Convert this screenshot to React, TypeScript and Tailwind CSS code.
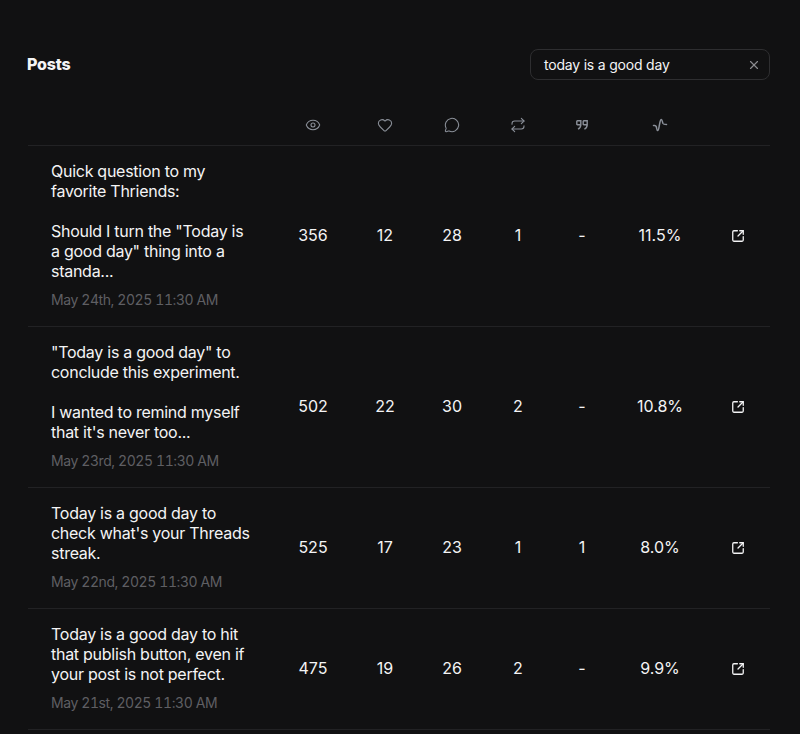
import { Eye, Heart, MessageCircle, Repeat, X, SquareArrowOutUpRight } from "lucide-react";

interface Post {
  lines: string[];
  date: string;
  views: string;
  likes: string;
  replies: string;
  reposts: string;
  quotes: string;
  rate: string;
}

const posts: Post[] = [
  {
    lines: ["Quick question to my", "favorite Thriends:", "", 'Should I turn the "Today is', 'a good day" thing into a', "standa..."],
    date: "May 24th, 2025 11:30 AM",
    views: "356",
    likes: "12",
    replies: "28",
    reposts: "1",
    quotes: "-",
    rate: "11.5%",
  },
  {
    lines: ['"Today is a good day" to', "conclude this experiment.", "", "I wanted to remind myself", "that it's never too..."],
    date: "May 23rd, 2025 11:30 AM",
    views: "502",
    likes: "22",
    replies: "30",
    reposts: "2",
    quotes: "-",
    rate: "10.8%",
  },
  {
    lines: ["Today is a good day to", "check what's your Threads", "streak."],
    date: "May 22nd, 2025 11:30 AM",
    views: "525",
    likes: "17",
    replies: "23",
    reposts: "1",
    quotes: "1",
    rate: "8.0%",
  },
  {
    lines: ["Today is a good day to hit", "that publish button, even if", "your post is not perfect."],
    date: "May 21st, 2025 11:30 AM",
    views: "475",
    likes: "19",
    replies: "26",
    reposts: "2",
    quotes: "-",
    rate: "9.9%",
  },
];

const cols = "grid grid-cols-[249px_72px_72px_62px_70px_58px_98px_61px] items-center";
const num = "mb-[2px] text-center";

function QuoteIcon() {
  return (
    <svg width="14" height="14" viewBox="0 0 14 14" fill="none" stroke="currentColor" strokeWidth="1.4">
      <path d="M5.800 2.800H2.400a.6.6 0 0 0-.6.6v2.800a.6.6 0 0 0 .6.6h3.400V2.800zM5.800 6.500c0 2.300-.8 3.800-2.800 4.700" />
      <path d="M12.200 2.800H8.800a.6.6 0 0 0-.6.6v2.800a.6.6 0 0 0 .6.6h3.400V2.800zM12.200 6.500c0 2.300-.8 3.800-2.800 4.700" />
    </svg>
  );
}

function WaveIcon() {
  return (
    <svg width="16" height="16" viewBox="0 0 16 16" fill="none" stroke="currentColor" strokeWidth="1.5" strokeLinecap="round">
      <path d="M1.500 8.500c1.600 0 2.300-.5 2.800 1.200.4 1.400.5 3.800 1.400 3.800s1.200-2.800 1.700-5.500C7.900 5.500 8.300 2.500 9.300 2.500s1 2.500 1.700 4c.5 1 1.500 1 3.500 1" />
    </svg>
  );
}

export default function App() {
  return (
    <div className="h-[734px] overflow-hidden bg-[#111112] pl-[28px] pr-[30px] pt-[49px] text-[#f4f4f5] [font-family:Inter,sans-serif]">
      <div className="flex items-center justify-between">
        <h1 className="-ml-px -mt-px text-base font-extrabold tracking-[-0.2px]">Posts</h1>
        <div className="flex h-[31px] w-[240px] items-center justify-between rounded-lg border border-[#2e2e30] pl-[13px] pr-[8px] text-sm tracking-[-0.2px]">
          <span>today is a good day</span>
          <X size={14} className="text-[#8a8a8e]" />
        </div>
      </div>

      <div className={`${cols} mt-[25px] h-[41px] border-b border-[#222224] text-[#8b9099]`}>
        <span />
        <span className="flex justify-center"><Eye size={16} strokeWidth={1.6} /></span>
        <span className="flex justify-center"><Heart size={16} strokeWidth={1.6} /></span>
        <span className="flex justify-center"><MessageCircle size={16} strokeWidth={1.6} /></span>
        <span className="flex justify-center"><Repeat size={16} strokeWidth={1.6} /></span>
        <span className="flex justify-center"><QuoteIcon /></span>
        <span className="flex justify-center"><WaveIcon /></span>
        <span />
      </div>

      {posts.map((post) => (
        <div key={post.date} className={`${cols} border-b border-[#222224] pt-[15px] pb-[16px] text-base`}>
          <div className="pl-[23px]">
            <div className="leading-5 tracking-[-0.27px]">
              {post.lines.map((line, i) => (
                <div key={i} className="h-5 whitespace-nowrap">{line}</div>
              ))}
            </div>
            <div className="mt-[9px] text-sm leading-5 tracking-[-0.42px] tabular-nums text-[#5f5f63]">{post.date}</div>
          </div>
          <span className={num}>{post.views}</span>
          <span className={num}>{post.likes}</span>
          <span className={num}>{post.replies}</span>
          <span className={num}>{post.reposts}</span>
          <span className={num}>{post.quotes}</span>
          <span className={num}>{post.rate}</span>
          <span className="flex justify-center pr-[3px]"><SquareArrowOutUpRight size={14} strokeWidth={2.2} /></span>
        </div>
      ))}
    </div>
  );
}
